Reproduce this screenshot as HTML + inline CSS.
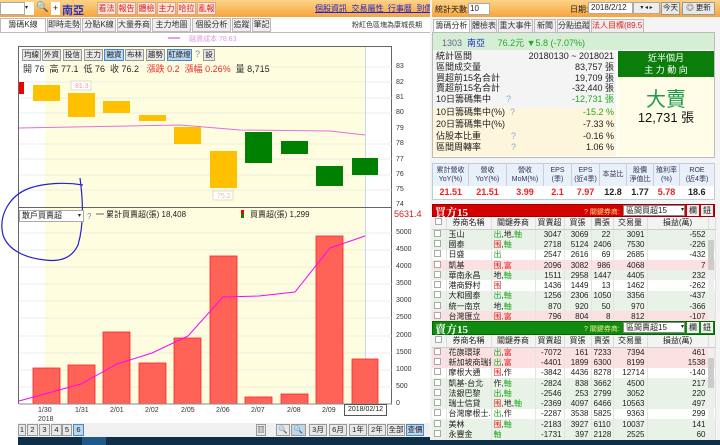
<!DOCTYPE html>
<html><head><meta charset="utf-8"><style>
*{margin:0;padding:0;box-sizing:border-box}
body{width:720px;height:445px;overflow:hidden;background:#fff;font-family:"Liberation Sans","Noto Sans CJK TC",sans-serif;font-size:9px;color:#222;position:relative}
.a{position:absolute}
.org{background:linear-gradient(#fcd38a,#f7a43a)}
.btn{position:absolute;top:2px;height:13px;width:19px;background:#fbe3d8;border:1px solid #d9a58c;color:#d22;font-size:8px;line-height:11px;text-align:center;white-space:nowrap;overflow:hidden}
.tab{position:absolute;top:18px;height:14px;border:1px solid #bbb;background:#eee;font-size:8px;line-height:12px;text-align:center;color:#333;white-space:nowrap;overflow:hidden}
.sb{position:absolute;height:12px;border:1px solid #999;background:#e8e8e8;font-size:7.5px;line-height:10px;text-align:center;white-space:nowrap;overflow:hidden}
.ax{position:absolute;left:396px;font-size:7px;color:#333}
table{border-collapse:collapse;table-layout:fixed}
.t td{height:10.3px;font-size:8px;line-height:9px;padding:0 2px;white-space:nowrap;overflow:hidden;border-right:1px solid #e4e4e4}
.t td.r{text-align:right}
.g{background:#e8f2e6}.p{background:#fbe1e1}.w{background:#fff}
.ch td{height:12px;background:#f3f3f3;text-align:center;font-size:8px;border-right:1px solid #ddd;border-bottom:1px solid #ccc}
.cb{display:inline-block;width:7px;height:7px;border:1px solid #aaa;background:#fff}
.rd{color:#e22}.gn{color:#2a2}
</style></head><body>
<div class="a org" style="left:0;top:0;width:430px;height:17px"></div>
<div class="a" style="left:0;top:2px;width:25px;height:13px;background:#fff;border:1px solid #aaa"></div>
<div class="a" style="left:25px;top:2px;width:9px;height:13px;background:#fff;font-size:6px;line-height:13px">▾</div>
<div class="a" style="left:36px;top:2px;font-size:10px;color:#678">🔍</div>
<div class="a" style="left:51px;top:2px;width:9px;height:13px;background:#fff;font-size:9px;text-align:center;line-height:13px">+</div>
<div class="a" style="left:62px;top:2px;font-size:11px;font-weight:bold;color:#23c">南亞</div>
<div class="btn" style="left:97px">看法</div><div class="btn" style="left:117px">報告</div><div class="btn" style="left:137px">體檢</div><div class="btn" style="left:157px">主力</div><div class="btn" style="left:177px">哈拉</div><div class="btn" style="left:197px">亂報</div>
<div class="a" style="left:315px;top:3px;font-size:8px;color:#22c;text-decoration:underline;white-space:nowrap">個股資訊&nbsp; 交易屬性&nbsp; 行事曆&nbsp; 到價通知</div>
<div class="tab" style="left:0;width:46px;background:#fff;border-bottom:none">籌碼K線</div>
<div class="tab" style="left:47px;width:34px">即時走勢</div>
<div class="tab" style="left:82px;width:34px">分點K線</div>
<div class="tab" style="left:117px;width:34px">大量券商</div>
<div class="tab" style="left:152px;width:39px">主力地圖</div>
<div class="tab" style="left:192px;width:39px">個股分析</div>
<div class="tab" style="left:232px;width:19px">追蹤</div>
<div class="tab" style="left:252px;width:19px">筆記</div>
<div class="a" style="left:352px;top:20px;font-size:7px;color:#333;white-space:nowrap">粉紅色區塊為康城長期</div>
<div class="a" style="left:0;top:32px;width:430px;height:1px;background:#bbb"></div>
<div class="a" style="left:168px;top:37px;width:12px;height:2px;background:#e8a0e8"></div>
<div class="a" style="left:189px;top:34px;font-size:7px;color:#d9d">融資成本 78.63</div>
<div class="a" style="left:18px;top:46px;width:374px;height:358px;border:1px solid #666;border-bottom:none;background:#fff"></div>
<div class="a" style="left:45px;top:47px;width:320px;height:357px;background:#fffde0"></div>
<div class="a" style="left:365px;top:47px;width:1px;height:357px;background:#c8d8f0"></div>
<div class="a" style="left:18px;top:207px;width:374px;height:1px;background:#666"></div>
<div class="sb" style="left:22px;top:49px;width:19px">均線</div><div class="sb" style="left:42px;top:49px;width:19px">外資</div><div class="sb" style="left:63px;top:49px;width:19px">投信</div><div class="sb" style="left:84px;top:49px;width:19px">主力</div><div class="sb" style="left:104px;top:49px;width:20px;background:#bcd6ee;border-color:#48c">融資</div><div class="sb" style="left:125px;top:49px;width:19px">布林</div><div class="sb" style="left:146px;top:49px;width:19px">趨勢</div><div class="sb" style="left:167px;top:49px;width:25px;background:#bcd6ee;border-color:#48c">紅綠燈</div><div class="a" style="left:195px;top:49px;color:#68c">?</div><div class="sb" style="left:203px;top:49px;width:12px">設</div>
<div class="a" style="left:23px;top:62px;font-size:9px;white-space:nowrap">開 76&nbsp; 高 77.1&nbsp; 低 76&nbsp; 收 76.2&nbsp;&nbsp; <span class="rd">漲跌 0.2&nbsp; 漲幅 0.26%</span>&nbsp; 量 8,715</div>
<div class="ax" style="top:63px">83</div><div class="ax" style="top:79px">82</div><div class="ax" style="top:94px">81</div><div class="ax" style="top:109px">80</div><div class="ax" style="top:125px">79</div><div class="ax" style="top:140px">78</div><div class="ax" style="top:156px">77</div><div class="ax" style="top:171px">76</div><div class="ax" style="top:186px">75</div><div class="ax" style="top:201px">74</div>
<svg class="a" style="left:0;top:0" width="430" height="445">
<g stroke="#ddd" stroke-width="0.5">
<line x1="19" y1="67" x2="392" y2="67"/><line x1="19" y1="82" x2="392" y2="82"/><line x1="19" y1="98" x2="392" y2="98"/><line x1="19" y1="113" x2="392" y2="113"/><line x1="19" y1="144" x2="392" y2="144"/><line x1="19" y1="159" x2="392" y2="159"/><line x1="19" y1="175" x2="392" y2="175"/><line x1="19" y1="190" x2="392" y2="190"/>
<line x1="19" y1="233" x2="392" y2="233"/><line x1="19" y1="250" x2="392" y2="250"/><line x1="19" y1="267" x2="392" y2="267"/><line x1="19" y1="284" x2="392" y2="284"/><line x1="19" y1="301" x2="392" y2="301"/><line x1="19" y1="318" x2="392" y2="318"/><line x1="19" y1="336" x2="392" y2="336"/><line x1="19" y1="353" x2="392" y2="353"/><line x1="19" y1="370" x2="392" y2="370"/><line x1="19" y1="387" x2="392" y2="387"/>
</g>
<rect x="19" y="82" width="5" height="12" fill="#e00"/>
<g fill="#ffc000"><rect x="33" y="85" width="27" height="16"/><rect x="68" y="93" width="27" height="24"/><rect x="103" y="101" width="27" height="12"/><rect x="139" y="115" width="27" height="6"/><rect x="174" y="127" width="27" height="17"/><rect x="210" y="151" width="27" height="37"/></g>
<g fill="#008000"><rect x="245" y="132" width="27" height="31"/><rect x="281" y="141" width="27" height="13"/><rect x="316" y="166" width="27" height="20"/><rect x="352" y="158" width="26" height="17"/></g>
<polyline points="19,128 180,125 240,130 330,131 365,135" fill="none" stroke="#e070e0" stroke-width="1"/>
<rect x="71" y="81" width="20" height="9" fill="#fff" stroke="#ddc"/><text x="75" y="88" font-size="7" fill="#f99">81.3</text>
<rect x="213" y="191" width="20" height="9" fill="#fff" stroke="#ddc"/><text x="217" y="198" font-size="7" fill="#cc9">75.2</text>
<g fill="#ff6358" stroke="#f22" stroke-width="0.8">
<rect x="33" y="368" width="27" height="36"/><rect x="68" y="365" width="27" height="39"/><rect x="103" y="332" width="27" height="72"/><rect x="139" y="363" width="27" height="41"/><rect x="174" y="338" width="27" height="66"/><rect x="210" y="256" width="27" height="148"/><rect x="245" y="397" width="27" height="7"/><rect x="281" y="394" width="27" height="10"/><rect x="316" y="236" width="27" height="168"/><rect x="352" y="359" width="26" height="45"/></g>
<polyline points="19,401 81,384 117,364 152,353 188,336 223,297 259,296 295,292 330,248 365,236" fill="none" stroke="#f0f" stroke-width="1"/>
<line x1="19" y1="404" x2="392" y2="404" stroke="#888"/>
<line x1="96" y1="214" x2="104" y2="214" stroke="#666"/>
<rect x="241" y="210" width="3" height="4" fill="#e00"/><rect x="241" y="214" width="3" height="4" fill="#080"/>
<path d="M80 178 C83 200 84 225 78 245 C72 258 60 262 45 260 C25 258 8 250 3 235 C-2 215 10 195 30 188 C45 183 65 182 83 185" fill="none" stroke="#22c" stroke-width="1.2"/>
</svg>
<div class="a" style="left:19px;top:210px;width:65px;height:12px;border:1px solid #aaa;background:#fff;font-size:8px;line-height:10px;padding-left:2px">散戶買賣超<span style="position:absolute;right:2px;font-size:6px">▾</span></div>
<div class="a" style="left:87px;top:212px;color:#68c;font-size:8px">?</div>
<div class="a" style="left:106px;top:209px;font-size:8px;white-space:nowrap">累計買賣超(張) 18,408</div>
<div class="a" style="left:250px;top:209px;font-size:8px;white-space:nowrap">買賣超(張) 1,299</div>
<div class="a" style="left:394px;top:209px;font-size:9px;color:#c22">5631.4</div>
<div class="ax" style="top:229px">5000</div><div class="ax" style="top:246px">4500</div><div class="ax" style="top:263px">4000</div><div class="ax" style="top:280px">3500</div><div class="ax" style="top:297px">3000</div><div class="ax" style="top:314px">2500</div><div class="ax" style="top:332px">2000</div><div class="ax" style="top:349px">1500</div><div class="ax" style="top:366px">1000</div><div class="ax" style="top:383px">500</div><div class="ax" style="top:400px">0</div>
<div class="a" style="top:407px;left:0;width:430px;font-size:7px;color:#333">
<span class="a" style="left:38px">1/30</span><span class="a" style="left:38px;top:9px">2018</span><span class="a" style="left:75px">1/31</span><span class="a" style="left:110px">2/01</span><span class="a" style="left:145px">2/02</span><span class="a" style="left:181px">2/05</span><span class="a" style="left:216px">2/06</span><span class="a" style="left:251px">2/07</span><span class="a" style="left:287px">2/08</span><span class="a" style="left:322px">2/09</span></div>
<div class="a" style="left:344px;top:404px;width:43px;height:12px;border:1px solid #555;background:#fff;font-size:7px;line-height:10px;text-align:center">2018/02/12</div>
<div class="a" style="left:18px;top:423px;width:412px;height:14px;background:#f0f0f0"></div>
<div class="sb" style="left:18px;top:424px;width:8px">1</div><div class="sb" style="left:27px;top:424px;width:11px">2</div><div class="sb" style="left:39px;top:424px;width:11px">3</div><div class="sb" style="left:51px;top:424px;width:11px">4</div><div class="sb" style="left:62px;top:424px;width:10px">5</div><div class="sb" style="left:73px;top:424px;width:11px;background:#bcd6ee;border-color:#48c">6</div>
<div class="sb" style="left:256px;top:424px;width:10px">▥</div><div class="sb" style="left:276px;top:424px;width:14px">🔍</div><div class="sb" style="left:291px;top:424px;width:15px;background:#bcd6ee">🔍</div><div class="sb" style="left:309px;top:424px;width:18px">3月</div><div class="sb" style="left:329px;top:424px;width:18px">6月</div><div class="sb" style="left:349px;top:424px;width:18px">1年</div><div class="sb" style="left:368px;top:424px;width:18px">2年</div><div class="sb" style="left:387px;top:424px;width:18px">全部</div><div class="sb" style="left:406px;top:424px;width:18px;background:#bcd6ee;border-color:#48c">查價</div>
<div class="a" style="left:18px;top:437px;width:702px;height:8px;background:#0f2e4a"></div>
<div class="a" style="left:82px;top:437px;width:24px;height:8px;background:#1d5a8a"></div>
<div class="a" style="left:430px;top:0;width:290px;height:440px;background:#f4f4f4"></div>
<div class="a org" style="left:432px;top:0;width:288px;height:17px"></div>
<div class="a" style="left:435px;top:4px;font-size:8px">統計天數:</div>
<div class="a" style="left:468px;top:3px;width:22px;height:12px;background:#fff;border:1px solid #aaa;font-size:8px;line-height:10px;padding-left:1px">10</div>
<div class="a" style="left:570px;top:4px;font-size:8px">日期:</div>
<div class="a" style="left:588px;top:2px;width:45px;height:12px;background:#fff;border:1px solid #aaa;font-size:8px;line-height:10px;padding-left:2px">2018/2/12</div>
<div class="a" style="left:633px;top:2px;width:27px;height:12px;background:#eee;border:1px solid #aaa;font-size:6px;line-height:10px;text-align:center">▾ ◂ ▸</div>
<div class="sb" style="left:661px;top:2px;width:19px;height:13px">今天</div>
<div class="sb" style="left:682px;top:2px;width:33px;height:13px">◎ 更新</div>
<div class="tab" style="left:433px;width:37px;background:#fff;border-bottom:none;top:19px">籌碼分析</div>
<div class="tab" style="left:471px;width:26px;top:19px">體檢表</div>
<div class="tab" style="left:498px;width:35px;top:19px">重大事件</div>
<div class="tab" style="left:534px;width:22px;top:19px">新聞</div>
<div class="tab" style="left:557px;width:33px;top:19px">分點追蹤</div>
<div class="tab" style="left:591px;width:53px;top:19px;color:#d22">法人目標(89.5元)</div>
<div class="a" style="left:432px;top:32px;width:283px;height:126px;border:1px solid #bbb;background:#fff"></div>
<div class="a" style="left:433px;top:33px;width:281px;height:17px;background:#d6eed6"></div>
<div class="a" style="left:442px;top:36px;font-size:9px;white-space:nowrap;color:#668">1303 <span style="color:#23c">&nbsp;南亞</span>&nbsp;&nbsp;&nbsp;&nbsp; <span style="color:#2a2">76.2元 ▼5.8 (-7.07%)</span></div>
<div class="a" style="left:433px;top:50px;width:183px;height:58px;background:#f4f4f4"></div>
<div class="a" style="left:433px;top:108px;width:183px;height:48px;background:#fdf5dc"></div>
<div class="a" style="left:436px;top:51px;font-size:9px;line-height:10.8px;width:178px">
<div>統計區間<span style="float:right">20180130 ~ 2018021</span></div>
<div>區間成交量<span style="float:right">83,757 張</span></div>
<div>買超前15名合計<span style="float:right">19,709 張</span></div>
<div>賣超前15名合計<span style="float:right">-32,440 張</span></div>
<div>10日籌碼集中 <span style="color:#8ad">&nbsp;&nbsp;&nbsp;&nbsp;&nbsp;?</span><span style="float:right;color:#2a2">-12,731 張</span></div>
<div style="margin-top:2px">10日籌碼集中(%) <span style="color:#8ad">&nbsp;?</span><span style="float:right;color:#2a2">-15.2 %</span></div>
<div style="margin-top:1px">20日籌碼集中(%)<span style="float:right">-7.33 %</span></div>
<div style="margin-top:1px">佔股本比重 <span style="color:#8ad">&nbsp;&nbsp;&nbsp;&nbsp;&nbsp;&nbsp;&nbsp;&nbsp;&nbsp;&nbsp;&nbsp;?</span><span style="float:right">-0.16 %</span></div>
<div style="margin-top:1px">區間周轉率 <span style="color:#8ad">&nbsp;&nbsp;&nbsp;&nbsp;&nbsp;&nbsp;&nbsp;&nbsp;&nbsp;&nbsp;&nbsp;?</span><span style="float:right">1.06 %</span></div></div>
<div class="a" style="left:618px;top:51px;width:96px;height:105px;background:#fffde8"></div>
<div class="a" style="left:618px;top:51px;width:96px;height:26px;background:#0a7d0a;color:#fff;font-size:9px;text-align:center;line-height:12px;padding-top:1px">近半個月<br>主 力 動 向</div>
<div class="a" style="left:618px;top:83px;width:96px;text-align:center;font-size:20px;color:#1a9a4a">大賣</div>
<div class="a" style="left:618px;top:107px;width:96px;text-align:center;font-size:13px;color:#111">12,731 張</div>
<table class="a" style="left:432px;top:163px;width:283px;border:1px solid #bcd;background:#fff">
<tr style="background:#e8f0fa;height:22px;font-size:7px;text-align:center;line-height:9px;color:#335">
<td style="width:36px;border-right:1px solid #ccd">累計營收<br>YoY(%)</td><td style="width:38px;border-right:1px solid #ccd">營收<br>YoY(%)</td><td style="width:37px;border-right:1px solid #ccd">營收<br>MoM(%)</td><td style="width:28px;border-right:1px solid #ccd">EPS<br>(季)</td><td style="width:28px;border-right:1px solid #ccd">EPS<br>(近4季)</td><td style="width:27px;border-right:1px solid #ccd">本益比</td><td style="width:27px;border-right:1px solid #ccd">股價<br>淨值比</td><td style="width:26px;border-right:1px solid #ccd">殖利率<br>(%)</td><td style="border-right:1px solid #ccd">ROE<br>(近4季)</td></tr>
<tr style="height:14px;font-size:9px;font-weight:bold;text-align:center"><td class="rd">21.51</td><td class="rd">21.51</td><td class="rd">3.99</td><td class="rd">2.1</td><td class="rd">7.97</td><td>12.8</td><td>1.77</td><td class="rd">5.78</td><td>18.6</td></tr></table>
<div class="a" style="left:432px;top:204px;width:283px;height:13px;background:#d40000;border:1px solid #900"></div>
<div class="a" style="left:435px;top:204px;font-size:11px;font-weight:bold;color:#fff;font-family:'Liberation Serif','Noto Serif CJK SC',serif">買方15</div>
<div class="a" style="left:584px;top:207px;font-size:7px;color:#fd8">? 關鍵券商:</div>
<div class="a" style="left:623px;top:205px;width:62px;height:11px;background:#fff;border:1px solid #888;font-size:8px;line-height:9px;padding-left:2px">區間買超15<span style="float:right;font-size:6px">▾</span></div>
<div class="a" style="left:687px;top:205px;width:12px;height:11px;background:#eee;font-size:8px;text-align:center;line-height:11px">欄</div><div class="a" style="left:701px;top:205px;width:12px;height:11px;background:#eee;font-size:8px;text-align:center;line-height:11px">鈕</div>
<table class="a t" style="left:432px;top:217px;width:283px;background:#fff">
<colgroup><col style="width:14px"><col style="width:45px"><col style="width:44px"><col style="width:29px"><col style="width:27px"><col style="width:22px"><col style="width:34px"><col style="width:61px"><col style="width:7px"></colgroup>
<tr class="ch"><td><span class="cb"></span></td><td>券商名稱</td><td>關鍵券商</td><td>買賣超</td><td>買張</td><td>賣張</td><td>交易量</td><td>損益(萬)</td><td></td></tr>
<tr class="g"><td><span class="cb"></span></td><td>玉山</td><td><span class="gn">出</span>,地,<span class="gn">軸</span></td><td class="r">3047</td><td class="r">3069</td><td class="r">22</td><td class="r">3091</td><td class="r">-552</td><td></td></tr>
<tr class="g"><td><span class="cb"></span></td><td>國泰</td><td><span class="rd">围</span>,<span class="gn">軸</span></td><td class="r">2718</td><td class="r">5124</td><td class="r">2406</td><td class="r">7530</td><td class="r">-226</td><td></td></tr>
<tr class="w"><td><span class="cb"></span></td><td>日盛</td><td><span class="gn">出</span></td><td class="r">2547</td><td class="r">2616</td><td class="r">69</td><td class="r">2685</td><td class="r">-432</td><td></td></tr>
<tr class="p"><td><span class="cb"></span></td><td>凱基</td><td><span class="rd">围,富</span></td><td class="r">2096</td><td class="r">3082</td><td class="r">986</td><td class="r">4068</td><td class="r">7</td><td></td></tr>
<tr class="g"><td><span class="cb"></span></td><td>華南永昌</td><td>地,<span class="gn">軸</span></td><td class="r">1511</td><td class="r">2958</td><td class="r">1447</td><td class="r">4405</td><td class="r">232</td><td></td></tr>
<tr class="w"><td><span class="cb"></span></td><td>港商野村</td><td><span class="rd">围</span></td><td class="r">1436</td><td class="r">1449</td><td class="r">13</td><td class="r">1462</td><td class="r">-262</td><td></td></tr>
<tr class="g"><td><span class="cb"></span></td><td>大和國泰</td><td><span class="gn">出</span>,<span class="gn">軸</span></td><td class="r">1256</td><td class="r">2306</td><td class="r">1050</td><td class="r">3356</td><td class="r">-437</td><td></td></tr>
<tr class="g"><td><span class="cb"></span></td><td>統一南京</td><td>地,<span class="gn">軸</span></td><td class="r">870</td><td class="r">920</td><td class="r">50</td><td class="r">970</td><td class="r">-366</td><td></td></tr>
<tr class="p"><td><span class="cb"></span></td><td>台灣匯立</td><td><span class="rd">围,富</span></td><td class="r">796</td><td class="r">804</td><td class="r">8</td><td class="r">812</td><td class="r">-107</td><td></td></tr>
</table>
<div class="a" style="left:432px;top:321px;width:283px;height:14px;background:#118a11;border:1px solid #060"></div>
<div class="a" style="left:435px;top:321px;font-size:11px;font-weight:bold;color:#fff;font-family:'Liberation Serif','Noto Serif CJK SC',serif">賣方15</div>
<div class="a" style="left:584px;top:324px;font-size:7px;color:#ee8">? 關鍵券商:</div>
<div class="a" style="left:623px;top:322px;width:62px;height:11px;background:#fff;border:1px solid #888;font-size:8px;line-height:9px;padding-left:2px">區間賣超15<span style="float:right;font-size:6px">▾</span></div>
<div class="a" style="left:687px;top:322px;width:12px;height:11px;background:#eee;font-size:8px;text-align:center;line-height:11px">欄</div><div class="a" style="left:701px;top:322px;width:12px;height:11px;background:#eee;font-size:8px;text-align:center;line-height:11px">鈕</div>
<table class="a t" style="left:432px;top:335px;width:283px;background:#fff">
<colgroup><col style="width:14px"><col style="width:45px"><col style="width:44px"><col style="width:29px"><col style="width:27px"><col style="width:22px"><col style="width:34px"><col style="width:61px"><col style="width:7px"></colgroup>
<tr class="ch"><td><span class="cb"></span></td><td>券商名稱</td><td>關鍵券商</td><td>買賣超</td><td>買張</td><td>賣張</td><td>交易量</td><td>損益(萬)</td><td></td></tr>
<tr class="p"><td><span class="cb"></span></td><td>花旗環球</td><td><span class="gn">出</span>,<span class="rd">富</span></td><td class="r">-7072</td><td class="r">161</td><td class="r">7233</td><td class="r">7394</td><td class="r">461</td><td></td></tr>
<tr class="p"><td><span class="cb"></span></td><td>新加坡商瑞銀</td><td><span class="gn">出</span>,<span class="rd">富</span></td><td class="r">-4401</td><td class="r">1899</td><td class="r">6300</td><td class="r">8199</td><td class="r">1538</td><td></td></tr>
<tr class="w"><td><span class="cb"></span></td><td>摩根大通</td><td><span class="rd">围</span>,作</td><td class="r">-3842</td><td class="r">4436</td><td class="r">8278</td><td class="r">12714</td><td class="r">-140</td><td></td></tr>
<tr class="g"><td><span class="cb"></span></td><td>凱基-台北</td><td>作,<span class="gn">軸</span></td><td class="r">-2824</td><td class="r">838</td><td class="r">3662</td><td class="r">4500</td><td class="r">217</td><td></td></tr>
<tr class="g"><td><span class="cb"></span></td><td>法銀巴黎</td><td><span class="gn">出</span>,<span class="gn">軸</span></td><td class="r">-2546</td><td class="r">253</td><td class="r">2799</td><td class="r">3052</td><td class="r">220</td><td></td></tr>
<tr class="g"><td><span class="cb"></span></td><td>瑞士信貸</td><td><span class="rd">围</span>,地,<span class="gn">軸</span></td><td class="r">-2369</td><td class="r">4097</td><td class="r">6466</td><td class="r">10563</td><td class="r">497</td><td></td></tr>
<tr class="w"><td><span class="cb"></span></td><td>台灣摩根士...</td><td><span class="gn">出</span>,作</td><td class="r">-2287</td><td class="r">3538</td><td class="r">5825</td><td class="r">9363</td><td class="r">299</td><td></td></tr>
<tr class="g"><td><span class="cb"></span></td><td>美林</td><td><span class="rd">围</span>,<span class="gn">軸</span></td><td class="r">-2183</td><td class="r">3927</td><td class="r">6110</td><td class="r">10037</td><td class="r">141</td><td></td></tr>
<tr class="g"><td><span class="cb"></span></td><td>永豐金</td><td><span class="gn">軸</span></td><td class="r">-1731</td><td class="r">397</td><td class="r">2128</td><td class="r">2525</td><td class="r">60</td><td></td></tr>
</table>
<div class="a" style="left:708px;top:230px;width:6px;height:90px;background:#eee"></div><div class="a" style="left:708px;top:240px;width:6px;height:30px;background:#ccc"></div>
<div class="a" style="left:708px;top:348px;width:6px;height:90px;background:#eee"></div><div class="a" style="left:708px;top:358px;width:6px;height:30px;background:#ccc"></div>
<div class="a" style="left:430px;top:440px;width:290px;height:5px;background:#0f2e4a"></div>
</body></html>
